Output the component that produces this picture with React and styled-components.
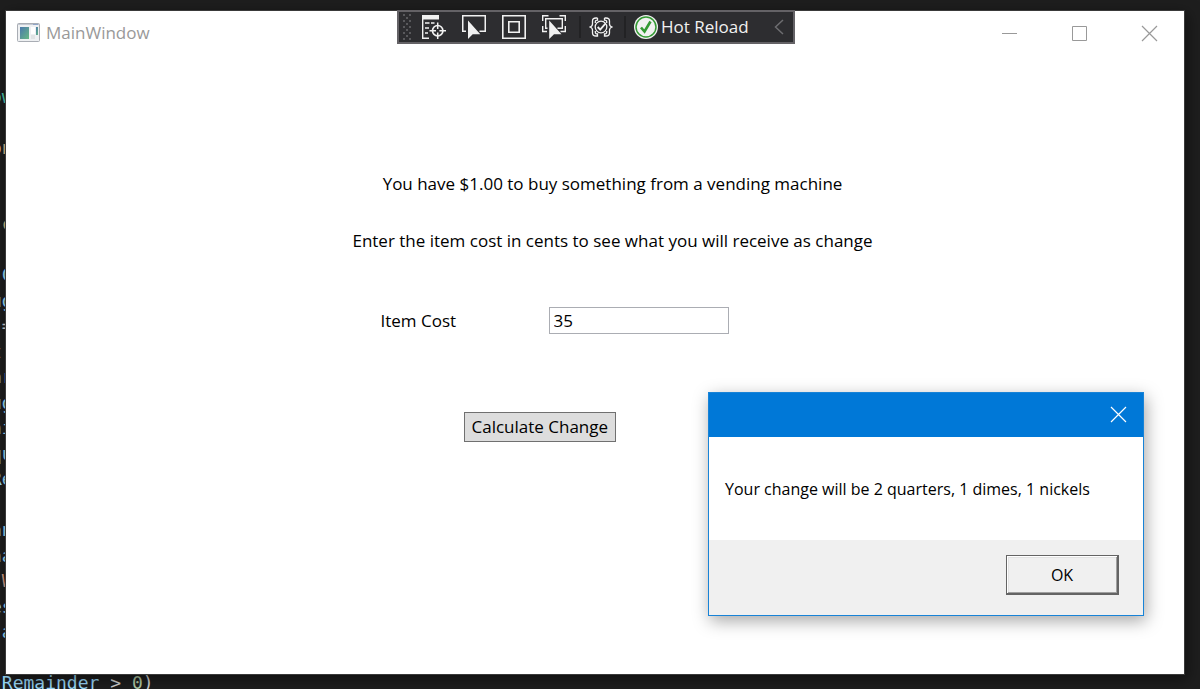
import React, { useState } from "react";
import styled, { createGlobalStyle } from "styled-components";

const GlobalStyle = createGlobalStyle`
  * { box-sizing: border-box; }
  body {
    margin: 0;
    background: #1e1e1e;
    color: #000;
    font-family: "Open Sans", "Noto Sans", sans-serif;
    font-size: 17px;
    line-height: 24px;
  }
  button, input { font: inherit; color: inherit; }
  p { margin: 0; }
`;

const Desktop = styled.div`
  position: relative;
  display: flex;
  min-height: 100vh;
  padding: 10px 15px 14px 5px;
  overflow: hidden;
`;

const Code = styled.div`
  position: absolute;
  top: 84px;
  bottom: -7px;
  left: -9px;
  display: grid;
  grid-auto-rows: 1fr;
  align-items: center;
  font-family: "DejaVu Sans Mono", monospace;
  font-size: 18px;
  line-height: 24px;
  white-space: pre;
`;

const CodeLine = styled.div`
  min-height: 24px;
  color: ${(p) => p.$color || "#9cdcfe"};
`;

const Token = styled.span`
  color: ${(p) => p.$color};
`;

const Window = styled.main`
  position: relative;
  flex: 1;
  min-width: 0;
  background: #fff;
  border: 1px solid #3a3a3a;
  box-shadow: 2px 4px 14px rgba(0, 0, 0, 0.5);
`;

const TitleBar = styled.header`
  display: flex;
  align-items: center;
  height: 44px;
  padding-left: 11px;
  color: #999;
`;

const Title = styled.h1`
  flex: 1;
  margin: 0 0 0 5px;
  font-size: 17px;
  font-weight: 400;
`;

const CaptionButton = styled.button`
  display: grid;
  place-items: center;
  width: ${(p) => p.$width || 70}px;
  height: 43px;
  padding: 0;
  border: 0;
  background: none;
  color: ${(p) => p.$color || "#999"};
`;

const DebugBar = styled.div`
  position: absolute;
  top: -1px;
  left: 50%;
  display: flex;
  align-items: center;
  width: 398px;
  height: 34px;
  margin-left: -198px;
  padding: 0 9px 0 4px;
  border: 2px solid #646266;
  background: #2d2d30;
  color: #f1f1f1;
`;

const Tool = styled.button`
  display: grid;
  place-items: center;
  width: ${(p) => p.$width || 40}px;
  height: 30px;
  padding: 0;
  border: 0;
  background: none;
`;

const Divider = styled.span`
  width: 2px;
  height: 22px;
  margin: 0 ${(p) => p.$gap || 0}px;
  background: #222224;
`;

const HotReload = styled.button`
  display: flex;
  flex: 1;
  align-items: center;
  gap: 3px;
  padding: 0;
  border: 0;
  background: none;
  white-space: nowrap;
`;

const FormArea = styled.section`
  padding: 117px 0 0 35px;
`;

const Form = styled.form`
  width: 524px;
  margin: 0 auto;
`;

const Message = styled.p`
  margin-bottom: 33px;
  text-align: center;
  white-space: nowrap;
`;

const Field = styled.div`
  display: flex;
  align-items: center;
  padding: 21px 0 0 30px;
`;

const Label = styled.label`
  width: 168px;
`;

const TextBox = styled.input`
  width: 180px;
  height: 27px;
  padding: 0 4px;
  border: 1px solid #abadb3;
  background: #fff;
  outline: none;
`;

const PrimaryButton = styled.button`
  display: block;
  height: 30px;
  margin: 78px 0 0 113px;
  padding: 0 7px;
  border: 1px solid #707070;
  background: #ddd;
  line-height: 28px;
  white-space: nowrap;
`;

const Dialog = styled.section`
  position: absolute;
  right: 40px;
  bottom: 58px;
  width: 436px;
  border: 1px solid #1883d7;
  background: #fff;
  box-shadow: 2px 5px 16px rgba(0, 0, 0, 0.35);
`;

const DialogBar = styled.header`
  display: flex;
  justify-content: flex-end;
  height: 44px;
  background: #0078d7;
`;

const DialogText = styled.p`
  padding: 40px 16px 39px;
  font-size: 16px;
  white-space: nowrap;
`;

const DialogFooter = styled.footer`
  display: flex;
  justify-content: flex-end;
  height: 75px;
  padding: 15px 24px 20px;
  background: #f0f0f0;
`;

const OkButton = styled.button`
  width: 113px;
  height: 40px;
  padding: 0;
  border: solid #646464;
  border-width: 1px 2px 2px 1px;
  background: #f0f0f0;
  box-shadow: inset 1px 1px #fff, inset -1px -1px #a0a0a0, inset 2px 2px #e3e3e3;
  font-size: 16px;
`;

const codeLines = [
  ["ow", "#4ec9b0"], null, ["on", "#dcb98a"], null, null, [".c", "#d7ba7d"], null,
  [".C"], ["ug"], [" =", "#d4d4d4"], ["t ", "#b5b56a"], ["ar"], ["ug"], ["ni"], ["qu"],
  ["Re"], null, ["an"], ["na"], ["\"W", "#d69d85"], ["es"], [".a"], null,
];

const CrossIcon = () => (
  <svg width="17" height="17" viewBox="0 0 17 17" fill="none" stroke="currentColor" strokeWidth="1.2">
    <path d="M1 1 16 16M16 1 1 16" />
  </svg>
);

const AppIcon = () => (
  <svg width="24" height="20" viewBox="0 0 24 20">
    <defs>
      <linearGradient id="pane" x1="0" y1="0" x2="1" y2="1">
        <stop offset="0" stopColor="#4b78ad" />
        <stop offset="1" stopColor="#68b984" />
      </linearGradient>
    </defs>
    <rect x="0.5" y="0.5" width="22" height="18" rx="1" fill="#eef0f2" stroke="#a9adb4" />
    <path d="M1 1.5H22" stroke="#c4c9d2" />
    <path d="M16 1.5H21" stroke="#8fa5c8" />
    <rect x="3" y="4" width="9" height="12" fill="url(#pane)" />
    <rect x="14" y="4" width="4" height="7" fill="#fff" />
    <rect x="14" y="12" width="4" height="4" fill="#e0e2e4" />
    <rect x="19" y="4" width="2" height="8" fill="url(#pane)" />
  </svg>
);

const Grip = () => (
  <svg width="11" height="27" viewBox="0 0 11 27" fill="#59595c">
    {[0, 6, 12, 18, 24].map((y) => (
      <React.Fragment key={y}>
        <path d={`M0 ${y}h2v2h-2zM6 ${y}h2v2h-2z`} />
        {y < 24 && <path d={`M3 ${y + 3}h2v2h-2z`} />}
      </React.Fragment>
    ))}
  </svg>
);

const LiveTreeIcon = () => (
  <svg width="24" height="24" viewBox="0 0 24 24" fill="none" stroke="#f1f1f1" strokeWidth="1.4">
    <path d="M0 0H17V4.5H0z" fill="#f1f1f1" stroke="none" />
    <path d="M.7 4V23.3H7M3 8H7.5M9 8H12.5M3 13H7M3 18H6" />
    <circle cx="15.7" cy="15.7" r="5.2" strokeWidth="1.7" />
    <path d="M15.7 7.5V14M15.7 17.4V24M7.5 15.7H14M17.4 15.7H24" strokeWidth="1.5" />
  </svg>
);

const SelectIcon = () => (
  <svg width="24" height="24" viewBox="0 0 24 24" fill="none" stroke="#f1f1f1" strokeWidth="1.5">
    <path d="M4 16.2H.75V.75H23.25V16.2H17.5" />
    <path d="M6 5.5V24L10.7 19.2H18.3z" fill="#f1f1f1" stroke="none" />
  </svg>
);

const AdornersIcon = () => (
  <svg width="24" height="24" viewBox="0 0 24 24" fill="none" stroke="#f1f1f1" strokeWidth="1.6">
    <path d="M.8.8H23.2V23.2H.8zM6.8 6.8H17.2V17.2H6.8z" />
  </svg>
);

const TrackIcon = () => (
  <svg width="24" height="24" viewBox="0 0 24 24" fill="none" stroke="#f1f1f1" strokeWidth="1.4">
    <path d="M.7 6V.7H6.5M17.5.7H23.3V6M23.3 11V16.5H18.5M5 16.5H.7V11" />
    <path d="M5.5 13.3H3.7V3.7H20.3V13.3H15.5" />
    <path d="M7.2 5.5V24L12 19.2H19.5z" fill="#f1f1f1" stroke="none" />
  </svg>
);

const BindingIcon = () => (
  <svg width="24" height="20" viewBox="0 0 24 20" fill="none" stroke="#f1f1f1" strokeWidth="1.3">
    <path d="M8.5 1H7Q3.5 1 3.5 4V7Q3.5 9.2 1 10Q3.5 10.8 3.5 13V16Q3.5 19 7 19H8.5V16.8Q6.3 17 6.3 15V14M8.5 1V3.2Q6.3 3 6.3 5V6" />
    <path d="M15.5 1H17Q20.5 1 20.5 4V7Q20.5 9.2 23 10Q20.5 10.8 20.5 13V16Q20.5 19 17 19H15.5V16.8Q17.7 17 17.7 15V14M15.5 1V3.2Q17.7 3 17.7 5V6" />
    <circle cx="12" cy="10" r="5.8" />
    <path d="M8.7 10 11.2 12.6 16.5 6.5" strokeWidth="1.9" />
  </svg>
);

const CheckIcon = () => (
  <svg width="24" height="24" viewBox="0 0 24 24">
    <circle cx="12" cy="12" r="12" fill="#f1f1f1" />
    <circle cx="12" cy="12" r="10" fill="none" stroke="#339933" strokeWidth="1.5" />
    <path d="M7 12.5 10.5 16.5 16.5 6.5" fill="none" stroke="#339933" strokeWidth="2.6" />
  </svg>
);

const tools = [
  ["Go to Live Visual Tree", LiveTreeIcon],
  ["Select Element", SelectIcon],
  ["Display Layout Adorners", AdornersIcon],
  ["Track Focused Element", TrackIcon],
];

export default function App() {
  const [cost, setCost] = useState("35");
  return (
    <>
      <GlobalStyle />
      <Desktop>
        <Code aria-hidden="true">
          {codeLines.map((line, i) => (
            <CodeLine key={i} $color={line?.[1]}>{line?.[0]}</CodeLine>
          ))}
          <CodeLine>
            .Remainder <Token $color="#d4d4d4">&gt;</Token> <Token $color="#b5cea8">0</Token>
            <Token $color="#d4d4d4">)</Token>
          </CodeLine>
        </Code>
        <Window>
          <TitleBar>
            <AppIcon />
            <Title>MainWindow</Title>
            <CaptionButton aria-label="Minimize">
              <svg width="15" height="15" stroke="currentColor"><path d="M0 7.5H15" /></svg>
            </CaptionButton>
            <CaptionButton aria-label="Maximize">
              <svg width="15" height="15" fill="none" stroke="currentColor"><path d="M.5.5H14.5V14.5H.5z" /></svg>
            </CaptionButton>
            <CaptionButton aria-label="Close"><CrossIcon /></CaptionButton>
          </TitleBar>
          <DebugBar role="toolbar" aria-label="Debugging">
            <Grip />
            {tools.map(([name, Icon]) => (
              <Tool key={name} aria-label={name}><Icon /></Tool>
            ))}
            <Divider $gap={5} />
            <Tool $width={30} aria-label="Binding Failures"><BindingIcon /></Tool>
            <Divider $gap={8} />
            <HotReload><CheckIcon />Hot Reload</HotReload>
            <svg width="10" height="16" fill="none" stroke="#6d6d70" strokeWidth="1.5">
              <path d="M9 1 1.5 8 9 15" />
            </svg>
          </DebugBar>
          <FormArea>
            <Form onSubmit={(e) => e.preventDefault()}>
              <Message>You have $1.00 to buy something from a vending machine</Message>
              <Message>Enter the item cost in cents to see what you will receive as change</Message>
              <Field>
                <Label htmlFor="item-cost">Item Cost</Label>
                <TextBox id="item-cost" value={cost} onChange={(e) => setCost(e.target.value)} />
              </Field>
              <PrimaryButton type="submit">Calculate Change</PrimaryButton>
            </Form>
          </FormArea>
          <Dialog role="dialog" aria-label="Change">
            <DialogBar>
              <CaptionButton aria-label="Close dialog" $color="#fff" $width={50}><CrossIcon /></CaptionButton>
            </DialogBar>
            <DialogText>Your change will be 2 quarters, 1 dimes, 1 nickels</DialogText>
            <DialogFooter><OkButton>OK</OkButton></DialogFooter>
          </Dialog>
        </Window>
      </Desktop>
    </>
  );
}
